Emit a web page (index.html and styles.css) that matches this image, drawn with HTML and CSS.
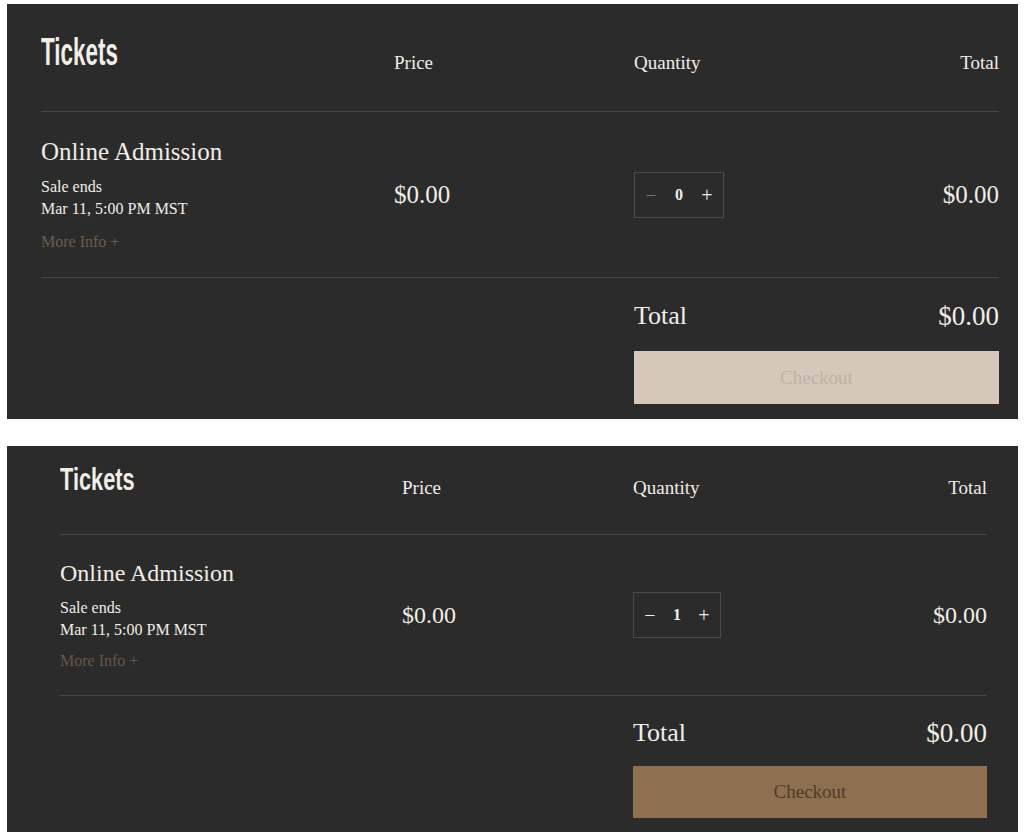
FILE: index.html
```html
<!DOCTYPE html>
<html lang="en">
<head>
  <meta charset="UTF-8">
  <meta name="viewport" content="width=device-width, initial-scale=1.0">
  <title>Tickets</title>
  <link rel="stylesheet" href="styles.css">
</head>
<body>

  <div class="page">

    <section class="tickets">
      <div class="tickets-head">
        <h2 class="tickets-title">Tickets</h2>
        <div class="col-label">Price</div>
        <div class="col-label">Quantity</div>
        <div class="col-label col-label--end">Total</div>
      </div>

      <div class="ticket-row">
        <div class="ticket-info">
          <h3 class="ticket-name">Online Admission</h3>
          <div class="ticket-meta">Sale ends</div>
          <div class="ticket-meta">Mar 11, 5:00 PM MST</div>
          <a href="#" class="more-info">More Info +</a>
        </div>
        <div class="price">$0.00</div>
        <div class="qty">
          <button class="qty-btn qty-btn--off">&minus;</button>
          <span class="qty-value">0</span>
          <button class="qty-btn">+</button>
        </div>
        <div class="line-total">$0.00</div>
      </div>

      <div class="summary">
        <div class="summary-row">
          <span>Total</span>
          <span class="summary-amount">$0.00</span>
        </div>
        <button class="checkout" disabled>Checkout</button>
      </div>
    </section>

    <section class="tickets tickets--selected">
      <div class="tickets-head">
        <h2 class="tickets-title">Tickets</h2>
        <div class="col-label">Price</div>
        <div class="col-label">Quantity</div>
        <div class="col-label col-label--end">Total</div>
      </div>

      <div class="ticket-row">
        <div class="ticket-info">
          <h3 class="ticket-name">Online Admission</h3>
          <div class="ticket-meta">Sale ends</div>
          <div class="ticket-meta">Mar 11, 5:00 PM MST</div>
          <a href="#" class="more-info">More Info +</a>
        </div>
        <div class="price">$0.00</div>
        <div class="qty">
          <button class="qty-btn">&minus;</button>
          <span class="qty-value">1</span>
          <button class="qty-btn">+</button>
        </div>
        <div class="line-total">$0.00</div>
      </div>

      <div class="summary">
        <div class="summary-row">
          <span>Total</span>
          <span class="summary-amount">$0.00</span>
        </div>
        <button class="checkout">Checkout</button>
      </div>
    </section>

  </div>

</body>
</html>
```

FILE: styles.css
```css
body {
  margin: 0;
  background-color: #fff;
  font-family: "Liberation Serif", "Times New Roman", serif;
  color: #f1ede7;
}

.page {
  display: flex;
  flex-direction: column;
  gap: 27px;
  padding: 4px 0 0 7px;
}

.tickets {
  width: 1011px;
  box-sizing: border-box;
  padding: 0 19px 15px 34px;
  background-color: #2b2b2b;
}

.tickets-head,
.ticket-row {
  display: grid;
  grid-template-columns: 353px 240px 1fr auto;
}

.tickets-head {
  align-items: start;
  height: 108px;
  box-sizing: border-box;
  padding-top: 29px;
  border-bottom: 1px solid #474747;
}

.tickets-title {
  margin: 0;
  font-family: "Liberation Sans", Arial, sans-serif;
  font-weight: 700;
  font-size: 38px;
  line-height: 1;
  transform: scaleX(0.59);
  transform-origin: left top;
}

.col-label {
  margin-top: 18px;
  font-size: 19px;
  line-height: 24px;
}

.col-label--end {
  justify-self: end;
}

.ticket-row {
  align-items: center;
  padding: 25px 0 24px;
  border-bottom: 1px solid #474747;
}

.ticket-name {
  margin: 0 0 9px;
  font-weight: normal;
  font-size: 25px;
  line-height: 30px;
}

.ticket-meta {
  font-size: 16px;
  line-height: 22px;
}

.more-info {
  display: inline-block;
  margin-top: 11px;
  font-size: 16px;
  line-height: 22px;
  color: #6f5b49;
  text-decoration: none;
}

.price,
.line-total {
  font-size: 25px;
}

.line-total {
  justify-self: end;
}

.qty {
  display: flex;
  justify-content: space-between;
  align-items: center;
  width: 90px;
  height: 46px;
  box-sizing: border-box;
  padding: 0 8px;
  border: 1px solid #4a4a4a;
}

.qty-btn {
  width: 16px;
  padding: 0;
  border: none;
  background: none;
  color: #f1ede7;
  font-family: inherit;
  font-size: 20px;
  cursor: pointer;
}

.qty-btn--off {
  color: #6e6e6e;
}

.qty-value {
  font-size: 16px;
  font-weight: 700;
}

.summary {
  margin-left: 593px;
  padding-top: 22px;
}

.summary-row {
  display: flex;
  justify-content: space-between;
  align-items: center;
  font-size: 26px;
  line-height: 32px;
}

.summary-amount {
  font-size: 27px;
}

.checkout {
  display: block;
  width: 100%;
  height: 53px;
  margin-top: 19px;
  border: none;
  background-color: #d5c7b9;
  color: #bfb2a5;
  font-family: inherit;
  font-size: 19px;
}

/* second panel: one ticket picked */
.tickets--selected {
  padding: 0 31px 14px 53px;
}

.tickets--selected .tickets-head,
.tickets--selected .ticket-row {
  grid-template-columns: 342px 231px 1fr auto;
}

.tickets--selected .tickets-head {
  height: 89px;
  padding-top: 17px;
}

.tickets--selected .tickets-title {
  font-size: 32px;
  transform: scaleX(0.68);
}

.tickets--selected .col-label {
  margin-top: 13px;
}

.tickets--selected .ticket-row {
  padding: 23px 0;
}

.tickets--selected .ticket-name {
  font-size: 24px;
}

.tickets--selected .more-info {
  margin-top: 9px;
  color: #6a5644;
}

.tickets--selected .price,
.tickets--selected .line-total {
  font-size: 24px;
}

.tickets--selected .qty {
  width: 88px;
}

.tickets--selected .summary {
  margin-left: 573px;
  padding-top: 21px;
}

.tickets--selected .checkout {
  height: 52px;
  margin-top: 17px;
  background-color: #8e6f4f;
  color: #4d3c2c;
  cursor: pointer;
}
```
